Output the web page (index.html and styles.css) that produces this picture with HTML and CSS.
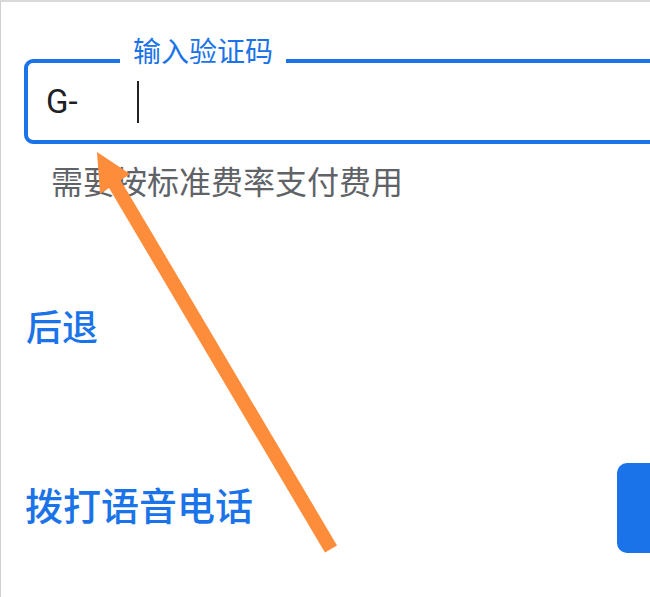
FILE: index.html
```html
<!DOCTYPE html>
<html lang="zh-CN">
<head>
<meta charset="utf-8">
<title>输入验证码</title>
<link rel="stylesheet" href="styles.css">
</head>
<body>
<div class="page">
  <div class="field">
    <span class="field-label">输入验证码</span>
    <div class="field-value">
      <span class="prefix">G-</span>
      <span class="cursor"></span>
    </div>
  </div>
  <p class="helper">需要按标准费率支付费用</p>
  <div class="back">后退</div>
  <div class="row">
    <div class="voice">拨打语音电话</div>
    <div class="button"></div>
  </div>
  <svg class="annotation" width="650" height="597" viewBox="0 0 650 597">
    <line x1="331" y1="549" x2="113" y2="181" stroke="#fe8d3b" stroke-width="14" />
    <polygon points="97,152 130,174 100,194" fill="#fe8d3b" />
  </svg>
</div>
</body>
</html>
```

FILE: styles.css
```css
html, body {
  margin: 0;
  padding: 0;
  background: #ffffff;
  overflow: hidden;
}

.page {
  position: relative;
  width: 649px;
  height: 595px;
  border-top: 2px solid #d9d9d9;
  border-left: 1px solid #d0d0d0;
  font-family: "Noto Sans CJK SC", "Noto Sans", sans-serif;
  overflow: hidden;
}

.field {
  position: relative;
  margin-top: 57px;
  margin-left: 23px;
  width: 700px;
  height: 77px;
  border: 4px solid #1a73e8;
  border-radius: 9px;
  display: flex;
  align-items: center;
}

.field-label {
  position: absolute;
  top: -31px;
  left: 92px;
  padding: 4px 13px;
  background: #ffffff;
  color: #1a73e8;
  font-size: 28px;
  line-height: 1;
}

.field-value {
  display: flex;
  align-items: center;
  padding-left: 18px;
}

.prefix {
  font-family: Roboto, "Liberation Sans", sans-serif;
  font-size: 33px;
  color: #202124;
  width: 91px;
}

.cursor {
  width: 2px;
  height: 42px;
  background: #202124;
}

.helper {
  margin: 16px 0 0 50px;
  font-size: 32px;
  line-height: 40px;
  color: #5f6368;
}

.back {
  margin: 103px 0 0 25px;
  font-size: 36px;
  line-height: 44px;
  font-weight: 500;
  color: #1a73e8;
}

.row {
  display: flex;
  justify-content: space-between;
  align-items: center;
  margin: 116px -80px 0 24px;
}

.voice {
  font-size: 38px;
  line-height: 44px;
  padding-bottom: 9px;
  font-weight: 500;
  color: #1a73e8;
}

.button {
  width: 113px;
  height: 90px;
  border-radius: 10px;
  background: #1a73e8;
}

.annotation {
  position: absolute;
  left: -1px;
  top: -2px;
}
```
